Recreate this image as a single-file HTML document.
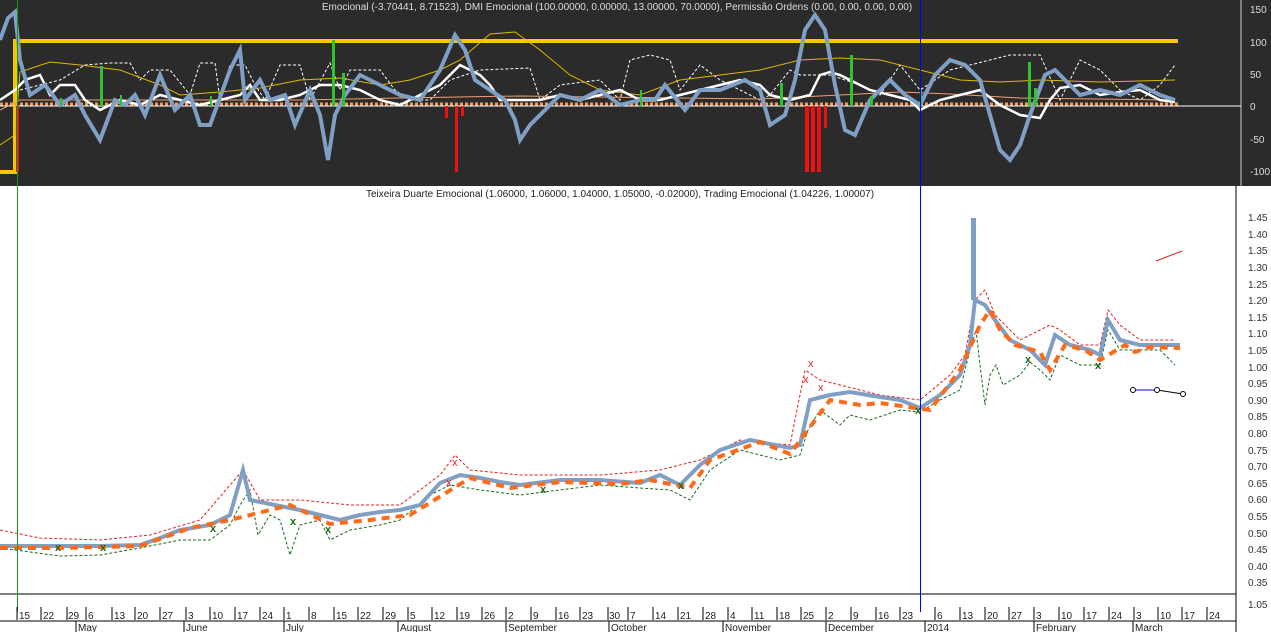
<!DOCTYPE html>
<html><head><meta charset="utf-8"><style>
html,body{margin:0;padding:0;background:#fff;overflow:hidden}
svg{display:block;font-family:"Liberation Sans",sans-serif}
</style></head><body>
<svg width="1271" height="632" viewBox="0 0 1271 632" xmlns="http://www.w3.org/2000/svg">
<rect x="0" y="0" width="1271" height="186" fill="#2b2b2b"/>
<rect x="0" y="186" width="1271" height="446" fill="#fff"/>
<!-- top panel axis -->
<line x1="1241" y1="0" x2="1241" y2="186" stroke="#ccc" stroke-width="1"/>
<line x1="0" y1="106" x2="1241" y2="106" stroke="#fff" stroke-width="1"/>
<g fill="#ddd" font-size="10">
<text x="1250" y="13">150</text><text x="1250" y="46">100</text><text x="1250" y="78">50</text><text x="1250" y="110">0</text><text x="1250" y="143">-50</text><text x="1250" y="175">-100</text>
</g>
<text x="617" y="10" fill="#ddd" font-size="10" text-anchor="middle">Emocional (-3.70441, 8.71523), DMI Emocional (100.00000, 0.00000, 13.00000, 70.0000), Permissão Ordens (0.00, 0.00, 0.00, 0.00)</text>
<!-- yellow thick -->
<polyline points="0,172 15,172 15,41 1178,41" fill="none" stroke="#f7c800" stroke-width="4"/>
<!-- orange baseline -->
<line x1="0" y1="104" x2="1178" y2="104" stroke="#f29a5a" stroke-width="3" stroke-dasharray="3,2"/>
<!-- dashed white -->
<polyline points="20,90 60,80 85,65 110,63 130,63 140,80 150,70 170,70 190,95 200,63 215,63 220,100 230,65 245,65 255,85 265,100 280,65 300,65 310,100 330,63 340,90 350,70 380,70 395,90 410,100 430,100 450,80 480,70 530,68 540,100 560,85 600,80 620,100 630,60 650,55 670,60 680,90 700,65 720,80 740,90 760,100 770,95 790,70 800,75 830,75 860,85 880,95 900,65 920,90 950,70 990,60 1010,55 1040,55 1060,100 1080,60 1100,70 1120,90 1140,100 1160,85 1175,65" fill="none" stroke="#fff" stroke-width="1" stroke-dasharray="3,2"/>
<!-- yellow thin -->
<polyline points="0,145 15,135 20,72 50,62 80,65 120,70 160,85 180,95 220,92 260,88 300,80 340,78 380,85 410,80 440,70 460,60 490,34 515,32 540,50 570,75 600,90 640,95 680,80 720,75 760,70 800,60 840,58 880,60 920,70 960,80 1000,82 1040,80 1100,82 1175,80" fill="none" stroke="#e0b800" stroke-width="1"/>
<polyline points="0,110 20,100 120,100 300,100 400,98 520,96 680,98 760,99 900,92 950,94 1020,98 1175,100" fill="none" stroke="#f0a070" stroke-width="1"/>
<!-- white thick -->
<polyline points="0,100 15,90 25,80 40,75 50,95 60,85 75,85 85,100 100,110 120,100 140,105 160,95 180,100 200,105 220,100 240,95 250,85 260,100 280,100 300,95 320,85 340,85 360,90 380,100 400,105 420,95 440,85 450,75 460,65 470,70 480,75 490,85 500,100 520,100 540,100 560,95 580,100 600,95 620,90 640,100 660,100 680,95 700,90 720,85 740,80 760,85 770,95 790,100 810,95 820,75 830,72 840,75 850,80 870,90 890,95 910,100 920,110 940,100 960,95 980,90 1000,105 1020,115 1040,118 1050,100 1060,88 1080,85 1100,95 1120,92 1140,90 1160,100 1175,102" fill="none" stroke="#fff" stroke-width="2.5"/>
<!-- blue thick -->
<polyline points="0,40 8,18 15,12 20,60 30,95 45,85 60,105 75,95 85,115 100,140 115,100 125,105 135,95 145,115 160,75 175,110 190,95 200,125 210,125 230,70 240,50 245,100 260,80 270,100 285,95 295,125 310,90 320,115 328,160 335,115 345,95 360,75 380,85 400,95 420,100 440,70 455,35 465,50 475,80 490,90 505,100 515,120 520,140 530,125 545,110 560,95 580,100 600,90 620,105 640,100 655,100 665,85 685,110 700,90 720,90 745,80 760,90 770,125 785,115 795,80 805,30 815,15 825,30 835,85 845,130 855,135 870,100 890,80 905,95 920,105 935,75 950,60 965,65 980,80 990,115 1000,150 1010,160 1020,145 1030,115 1045,75 1055,70 1065,80 1080,95 1100,90 1120,95 1140,85 1160,95 1175,100" fill="none" stroke="#7f9fc4" stroke-width="4"/>
<!-- green bars -->
<g fill="#2fc42f">
<rect x="100" y="66" width="3" height="40"/><rect x="120" y="95" width="2" height="11"/><rect x="60" y="98" width="2" height="8"/>
<rect x="332" y="40" width="3" height="66"/><rect x="342" y="73" width="3" height="33"/><rect x="210" y="96" width="2" height="10"/>
<rect x="780" y="83" width="3" height="23"/><rect x="850" y="55" width="3" height="51"/><rect x="870" y="96" width="3" height="10"/>
<rect x="1028" y="62" width="3" height="44"/><rect x="1034" y="88" width="3" height="18"/><rect x="640" y="90" width="2" height="16"/><rect x="920" y="90" width="2" height="16"/>
</g>
<g fill="#ee1111">
<rect x="16" y="106" width="3" height="66"/><rect x="445" y="106" width="3" height="12"/><rect x="455" y="106" width="3" height="66"/><rect x="461" y="106" width="3" height="10"/>
<rect x="805" y="106" width="4" height="66"/><rect x="811" y="106" width="4" height="66"/><rect x="817" y="106" width="4" height="66"/><rect x="824" y="106" width="3" height="22"/>
</g>
<!-- price panel -->
<text x="620" y="197" fill="#222" font-size="10" text-anchor="middle">Teixeira Duarte Emocional (1.06000, 1.06000, 1.04000, 1.05000, -0.02000), Trading Emocional (1.04226, 1.00007)</text>
<line x1="1236" y1="186" x2="1236" y2="632" stroke="#000"/>
<line x1="0" y1="594" x2="1236" y2="594" stroke="#000"/>
<g fill="#333" font-size="10">
<text x="1248" y="221">1.45</text><text x="1248" y="238">1.40</text><text x="1248" y="254">1.35</text><text x="1248" y="271">1.30</text><text x="1248" y="288">1.25</text><text x="1248" y="304">1.20</text><text x="1248" y="321">1.15</text><text x="1248" y="337">1.10</text><text x="1248" y="354">1.05</text><text x="1248" y="371">1.00</text><text x="1248" y="387">0.95</text><text x="1248" y="404">0.90</text><text x="1248" y="420">0.85</text><text x="1248" y="437">0.80</text><text x="1248" y="454">0.75</text><text x="1248" y="470">0.70</text><text x="1248" y="487">0.65</text><text x="1248" y="503">0.60</text><text x="1248" y="520">0.55</text><text x="1248" y="537">0.50</text><text x="1248" y="553">0.45</text><text x="1248" y="570">0.40</text><text x="1248" y="586">0.35</text><text x="1248" y="608">1.05</text>
</g>
<!-- dashed green lower -->
<polyline points="0,548 30,552 60,556 100,555 140,548 180,540 210,540 230,525 240,505 250,490 258,535 270,515 280,520 290,555 300,525 320,520 330,540 350,530 380,525 400,520 430,495 450,485 480,490 520,495 560,490 600,485 640,488 670,490 690,500 710,470 740,450 760,455 780,460 800,455 808,430 820,410 840,425 850,415 870,420 900,410 920,412 940,400 960,390 970,350 976,330 980,365 985,405 990,375 996,365 1003,385 1020,375 1030,362 1040,370 1050,380 1060,355 1080,365 1100,365 1108,330 1120,350 1140,350 1160,350 1175,365" fill="none" stroke="#1a6a1a" stroke-width="1" stroke-dasharray="3,2"/>
<!-- dashed red upper -->
<polyline points="0,530 40,538 100,540 150,535 200,520 243,470 260,500 300,500 350,505 400,505 440,475 455,455 470,470 520,475 600,475 660,470 700,460 740,440 790,445 805,370 820,380 840,385 880,395 920,400 950,375 965,355 975,300 985,290 995,315 1020,340 1050,325 1060,330 1080,345 1100,345 1108,310 1120,325 1140,340 1175,340" fill="none" stroke="#e02020" stroke-width="1" stroke-dasharray="3,2"/>
<!-- price bars -->
<polyline points="0,546 60,546 100,546 140,545 160,538 180,530 210,525 230,515 243,470 250,500 280,506 300,510 320,515 340,520 360,515 380,512 400,510 420,505 440,483 460,475 480,478 500,482 520,485 560,480 600,480 640,483 660,475 680,485 700,465 720,450 750,440 790,448 800,445 810,400 830,395 850,392 880,397 900,400 920,408 940,395 960,375 970,345 975,300 985,305 995,320 1010,340 1030,350 1040,360 1045,365 1055,335 1070,345 1090,350 1100,355 1108,320 1120,340 1140,345 1160,345 1180,345" fill="none" stroke="#7f9fc4" stroke-width="4"/>
<polyline points="0,548 50,548 100,547 140,546 190,528 230,520 290,505 330,524 370,520 410,515 470,478 510,488 560,482 620,484 650,480 690,488 710,460 760,442 790,454 830,400 860,405 880,403 930,410 960,370 980,325 990,310 1000,330 1015,345 1040,352 1050,370 1065,345 1085,350 1100,360 1125,345 1135,352 1150,347 1180,348" fill="none" stroke="#ff6a1a" stroke-width="4" stroke-dasharray="8,6"/>
<rect x="971" y="218" width="5" height="82" fill="#7f9fc4"/>
<g fill="none" stroke="#1a6a1a" font-size="11">
</g>
<g fill="#1a6a1a" font-size="11" font-weight="bold"><text x="55" y="551">x</text><text x="100" y="551">x</text><text x="210" y="532">x</text><text x="290" y="525">x</text><text x="325" y="533">x</text><text x="540" y="493">x</text><text x="678" y="489">x</text><text x="915" y="414">x</text><text x="1025" y="363">x</text><text x="1095" y="369">x</text></g>
<g fill="#e02020" font-size="11"><text x="446" y="486">x</text><text x="452" y="466">x</text><text x="803" y="383">x</text><text x="808" y="367">x</text><text x="818" y="391">x</text></g>
<polyline points="1156,261 1182,251" stroke="#e02020" fill="none"/>
<polyline points="1133,390 1157,390" stroke="#0000ff" fill="none"/><polyline points="1157,390 1183,394" stroke="#000" fill="none"/>
<g fill="#fff" stroke="#000"><circle cx="1133" cy="390" r="2.5"/><circle cx="1157" cy="390" r="2.5"/><circle cx="1183" cy="394" r="2.5"/></g>
<!-- vertical lines -->
<line x1="17.5" y1="0" x2="17.5" y2="612" stroke="#1a9a1a"/>
<line x1="920.5" y1="0" x2="920.5" y2="612" stroke="#0000ff"/>
<!-- date axis -->
<line x1="0" y1="621" x2="1236" y2="621" stroke="#000"/>
<g stroke="#000">
<path d="M17 607V620M41 607V620M67 607V620M86 607V620M112 607V620M135 607V620M160 607V620M186 607V620M210 607V620M235 607V620M260 607V620M284 607V620M309 607V620M334 607V620M358 607V620M383 607V620M408 607V620M432 607V620M457 607V620M482 607V620M506 607V620M531 607V620M556 607V620M580 607V620M608 607V620M628 607V620M653 607V620M678 607V620M703 607V620M728 607V620M752 607V620M777 607V620M801 607V620M826 607V620M851 607V620M876 607V620M900 607V620M935 607V620M960 607V620M985 607V620M1009 607V620M1034 607V620M1059 607V620M1084 607V620M1109 607V620M1134 607V620M1158 607V620M1182 607V620M1207 607V620"/>
<path d="M76 621V632M184 621V632M284 621V632M398 621V632M506 621V632M609 621V632M723 621V632M826 621V632M925 621V632M1034 621V632M1133 621V632"/>
</g>
<g fill="#222" font-size="10">
<text x="19" y="619">15</text><text x="43" y="619">22</text><text x="68" y="619">29</text><text x="88" y="619">6</text><text x="114" y="619">13</text><text x="137" y="619">20</text><text x="162" y="619">27</text><text x="188" y="619">3</text><text x="212" y="619">10</text><text x="237" y="619">17</text><text x="262" y="619">24</text><text x="286" y="619">1</text><text x="311" y="619">8</text><text x="336" y="619">15</text><text x="360" y="619">22</text><text x="385" y="619">29</text><text x="410" y="619">5</text><text x="434" y="619">12</text><text x="459" y="619">19</text><text x="484" y="619">26</text><text x="508" y="619">2</text><text x="533" y="619">9</text><text x="558" y="619">16</text><text x="582" y="619">23</text><text x="609" y="619">30</text><text x="630" y="619">7</text><text x="655" y="619">14</text><text x="680" y="619">21</text><text x="705" y="619">28</text><text x="730" y="619">4</text><text x="754" y="619">11</text><text x="779" y="619">18</text><text x="803" y="619">25</text><text x="828" y="619">2</text><text x="853" y="619">9</text><text x="878" y="619">16</text><text x="902" y="619">23</text><text x="937" y="619">6</text><text x="962" y="619">13</text><text x="987" y="619">20</text><text x="1011" y="619">27</text><text x="1036" y="619">3</text><text x="1061" y="619">10</text><text x="1086" y="619">17</text><text x="1111" y="619">24</text><text x="1136" y="619">3</text><text x="1160" y="619">10</text><text x="1184" y="619">17</text><text x="1209" y="619">24</text>
<text x="78" y="631">May</text><text x="186" y="631">June</text><text x="286" y="631">July</text><text x="400" y="631">August</text><text x="508" y="631">September</text><text x="611" y="631">October</text><text x="725" y="631">November</text><text x="828" y="631">December</text><text x="927" y="631">2014</text><text x="1036" y="631">February</text><text x="1135" y="631">March</text>
</g>
</svg>
</body></html>
